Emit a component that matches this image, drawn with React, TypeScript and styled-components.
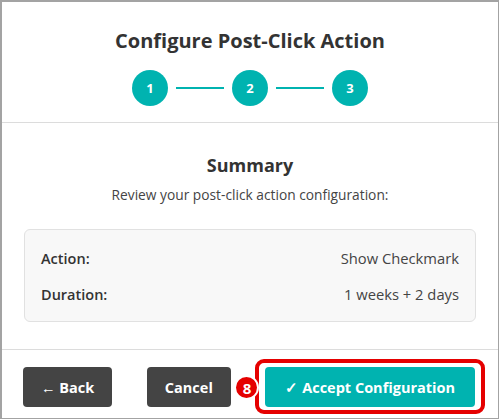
import React from 'react';
import styled, { createGlobalStyle } from 'styled-components';

const GlobalStyle = createGlobalStyle`
    html, body {
        margin: 0;
        padding: 0;
        background: #a3a3a3;
    }
    body {
        font-family: "Open Sans", "Noto Sans", sans-serif;
        color: #333;
    }
`;

const Modal = styled.div`
    box-sizing: border-box;
    width: 496px;
    height: 416px;
    margin: 2px 0 0 2px;
    background: #fff;
    display: flex;
    flex-direction: column;
`;

const Header = styled.div`
    padding: 24px 0 16px;
    border-bottom: 1px solid #dcdcdc;
    display: flex;
    flex-direction: column;
    align-items: center;
    gap: 14px;
`;

const Title = styled.h2`
    margin: 0;
    font-size: 20px;
    line-height: 30px;
    font-weight: 700;
    color: #333;
`;

const Steps = styled.div`
    display: flex;
    align-items: center;
`;

const StepCircle = styled.div`
    width: 36px;
    height: 36px;
    border-radius: 50%;
    background: #00b3b0;
    color: #fff;
    font-size: 13px;
    font-weight: 700;
    display: flex;
    align-items: center;
    justify-content: center;
`;

const StepLine = styled.div`
    width: 48px;
    height: 2px;
    margin: 0 8px;
    background: #00b3b0;
`;

const Body = styled.div`
    flex: 1;
    padding: 29px 22px 0;
    display: flex;
    flex-direction: column;
    align-items: center;
`;

const SectionTitle = styled.h3`
    margin: 0;
    font-size: 18px;
    line-height: 26px;
    font-weight: 700;
    color: #333;
`;

const Hint = styled.p`
    margin: 8px 0 25px;
    font-size: 13.75px;
    line-height: 18px;
    color: #444;
`;

const SummaryBox = styled.div`
    box-sizing: border-box;
    align-self: stretch;
    background: #f8f8f8;
    border: 1px solid #e1e1e1;
    border-radius: 6px;
    padding: 10px 16px 9px;
`;

const SummaryRow = styled.div`
    display: flex;
    justify-content: space-between;
    align-items: center;
    height: 36px;
`;

const Label = styled.span`
    font-size: 14.5px;
    font-weight: 600;
    color: #333;
`;

const Value = styled.span`
    font-size: 14.75px;
    color: #444;
`;

const Footer = styled.div`
    border-top: 1px solid #dcdcdc;
    padding: 17px 21px 11px;
    display: flex;
    justify-content: space-between;
    align-items: center;
`;

const Button = styled.button<{ $primary?: boolean }>`
    height: 40px;
    padding: 0 ${p => (p.$primary ? '20px' : '18px')};
    border: none;
    border-radius: 4px;
    background: ${p => (p.$primary ? '#00b3b0' : '#444444')};
    color: #fff;
    font-family: inherit;
    font-size: 14.5px;
    font-weight: 700;
    cursor: pointer;
`;

const Highlight = styled.div`
    position: relative;
    display: flex;
    margin-right: 2px;
`;

const HighlightRing = styled.div`
    position: absolute;
    left: -10px;
    right: -10px;
    top: -8px;
    bottom: -7px;
    border: 4px solid #e50000;
    border-radius: 9px;
    pointer-events: none;
`;

const Badge = styled.div`
    position: absolute;
    left: -31px;
    top: 8px;
    width: 21px;
    height: 21px;
    border: 2px solid #fff;
    border-radius: 50%;
    background: #e50000;
    color: #fff;
    font-size: 15px;
    font-weight: 700;
    display: flex;
    align-items: center;
    justify-content: center;
`;

const summary = [
    { label: 'Action:', value: 'Show Checkmark' },
    { label: 'Duration:', value: '1 weeks + 2 days' },
];

const App = () => {
    return (
        <>
            <GlobalStyle />
            <Modal>
                <Header>
                    <Title>Configure Post-Click Action</Title>
                    <Steps>
                        <StepCircle>1</StepCircle>
                        <StepLine />
                        <StepCircle>2</StepCircle>
                        <StepLine />
                        <StepCircle>3</StepCircle>
                    </Steps>
                </Header>

                <Body>
                    <SectionTitle>Summary</SectionTitle>
                    <Hint>Review your post-click action configuration:</Hint>
                    <SummaryBox>
                        {summary.map(row => (
                            <SummaryRow key={row.label}>
                                <Label>{row.label}</Label>
                                <Value>{row.value}</Value>
                            </SummaryRow>
                        ))}
                    </SummaryBox>
                </Body>

                <Footer>
                    <Button>← Back</Button>
                    <Button>Cancel</Button>
                    <Highlight>
                        <HighlightRing />
                        <Badge>8</Badge>
                        <Button $primary>✓ Accept Configuration</Button>
                    </Highlight>
                </Footer>
            </Modal>
        </>
    );
}

export default App;
